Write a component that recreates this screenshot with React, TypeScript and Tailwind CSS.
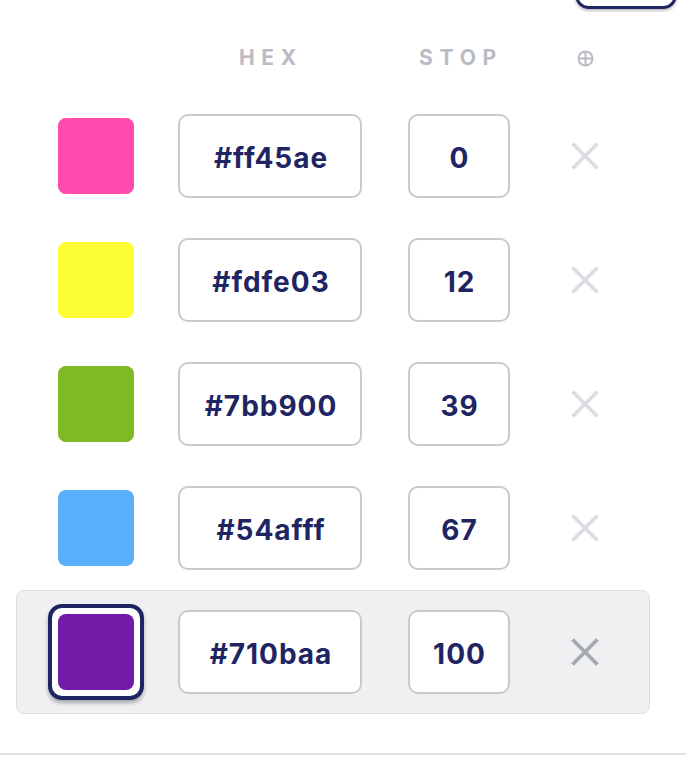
import React from "react";

// valeurs affichées + couleur vue à l'écran
const stops = [
  { hex: "#ff45ae", color: "#ff4aae", stop: "0" },
  { hex: "#fdfe03", color: "#fdfd36", stop: "12" },
  { hex: "#7bb900", color: "#7fb925", stop: "39" },
  { hex: "#54afff", color: "#5ab0fd", stop: "67" },
  { hex: "#710baa", color: "#711ba8", stop: "100" },
];

const field =
  "h-[84px] pt-[4px] rounded-[10px] border-2 border-[#c8cacf] bg-white flex items-center justify-center font-bold text-[28px] tracking-[0.035em] text-[#1f2563]";

function Cross({ dark }: { dark: boolean }) {
  return (
    <svg width="30" height="30" viewBox="0 0 30 30" fill="none">
      <path
        d="M2.5 2.5 L27.5 27.5 M27.5 2.5 L2.5 27.5"
        stroke={dark ? "#a6a9b3" : "#dcdde2"}
        strokeWidth="3.8"
      />
    </svg>
  );
}

export default function App() {
  const selected = stops.length - 1;

  return (
    <div className="w-[686px] h-[764px] bg-white overflow-hidden font-['Inter',sans-serif]">
      {/* bouton coupé en haut */}
      <div className="h-[12px] flex justify-end items-end pr-[9px] overflow-hidden">
        <div className="w-[102px] h-[44px] shrink-0 mb-[3px] rounded-[14px] border-[3px] border-[#1f2563] bg-white shadow-[0_2px_3px_rgba(0,0,0,0.25)]" />
      </div>

      {/* entêtes */}
      <div className="h-[82px] pt-[10px] flex items-center pl-[48px] text-[#b9bcc4] font-bold text-[21px] tracking-[0.32em]">
        <div className="w-[96px]" />
        <div className="w-[184px] ml-[34px] text-center pl-[2px]">HEX</div>
        <div className="w-[102px] ml-[46px] text-center pl-[4px]">STOP</div>
        <div className="w-[30px] ml-[60px] flex justify-center">
          <svg width="17" height="17" viewBox="0 0 17 17" fill="none">
            <circle cx="8.5" cy="8.5" r="7" stroke="#b9bcc4" strokeWidth="2" />
            <path d="M8.5 1.5 V15.5 M1.5 8.5 H15.5" stroke="#b9bcc4" strokeWidth="2" />
          </svg>
        </div>
      </div>

      {/* lignes */}
      <div className="px-[16px]">
        {stops.map((s, i) => {
          const sel = i === selected;
          return (
            <div
              key={s.hex}
              className={
                "h-[124px] w-[634px] flex items-center pl-[31px] rounded-[8px] border " +
                (sel ? "bg-[#eff0f2] border-[#dcdde1]" : "border-transparent")
              }
            >
              <div className="w-[96px] h-[96px] flex items-center justify-center">
                {sel ? (
                  <div className="w-[96px] h-[96px] rounded-[14px] border-[4px] border-[#1f2563] bg-white p-[6px] shadow-[0_3px_4px_rgba(0,0,0,0.3)]">
                    <div className="w-full h-full rounded-[8px]" style={{ background: s.color }} />
                  </div>
                ) : (
                  <div className="w-[76px] h-[76px] rounded-[8px]" style={{ background: s.color }} />
                )}
              </div>
              <div className={"w-[184px] ml-[34px] pl-[2px] " + field}>{s.hex}</div>
              <div className={"w-[102px] ml-[46px] pl-[1px] " + field}>{s.stop}</div>
              <div className="w-[30px] ml-[60px] flex justify-center">
                <Cross dark={sel} />
              </div>
            </div>
          );
        })}
      </div>

      <div className="mt-[39px] h-[2px] bg-[#e0e1e5]" />
    </div>
  );
}
